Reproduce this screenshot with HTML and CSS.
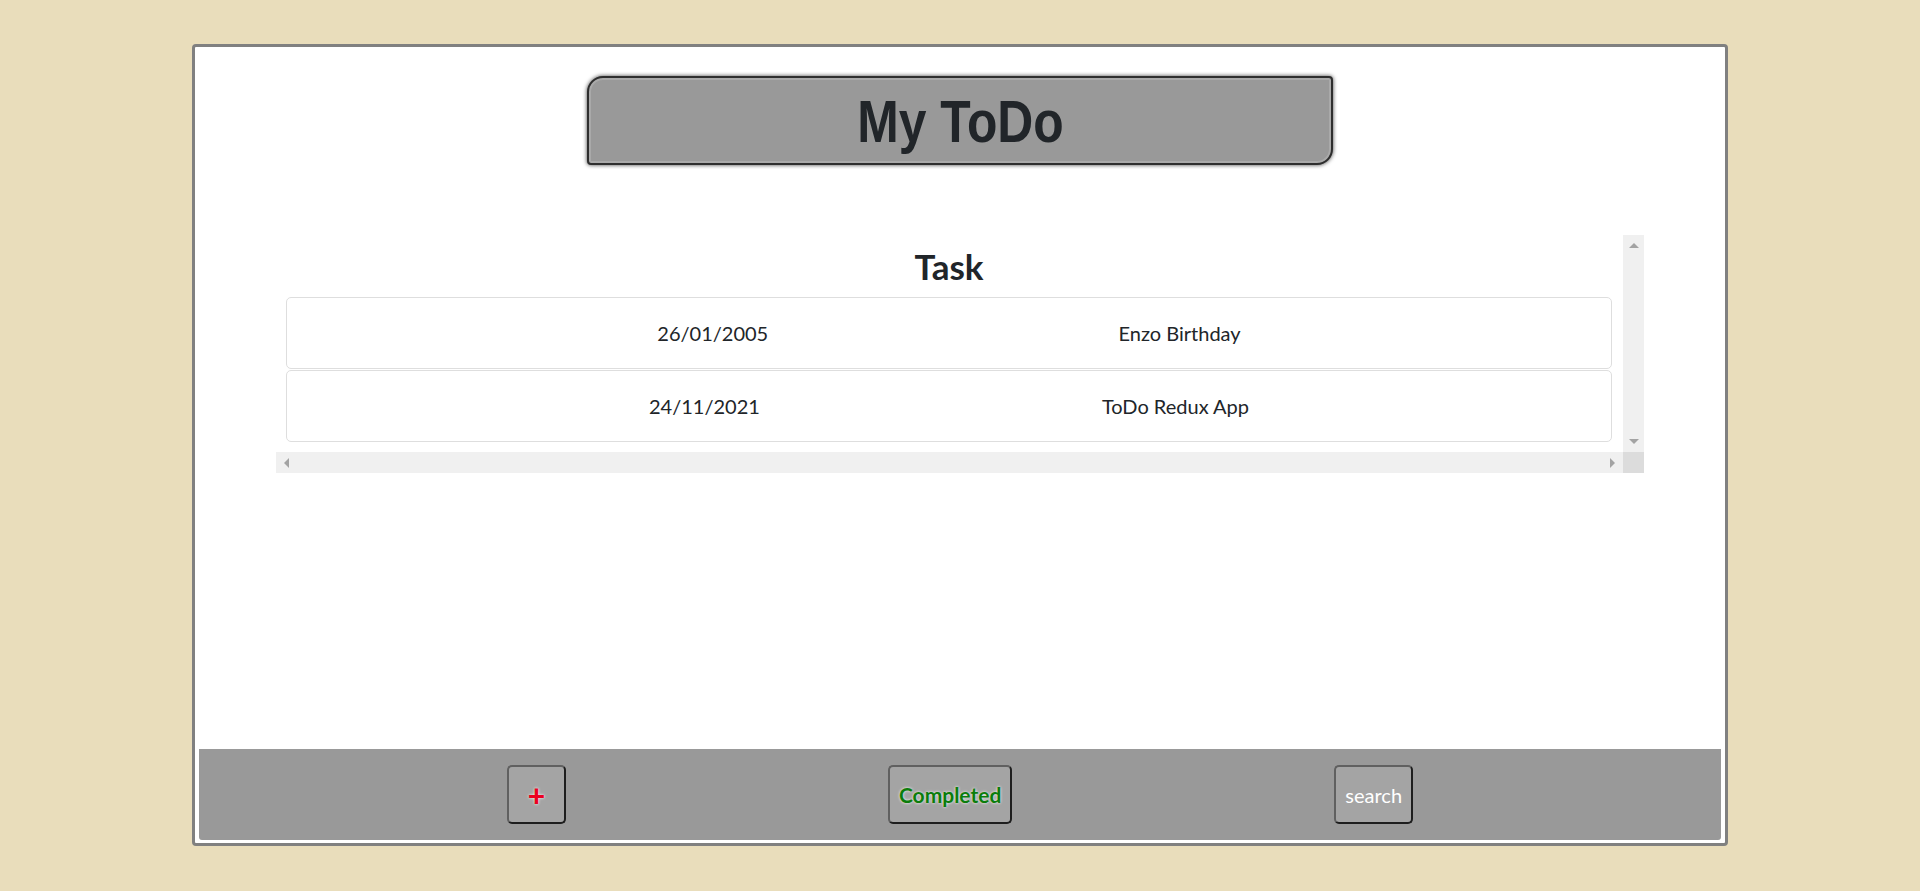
FILE: index.html
```html
<!DOCTYPE html>
<html lang="en">
<head>
<meta charset="utf-8">
<title>My ToDo</title>
<link rel="stylesheet" href="styles.css">
</head>
<body>
<div class="app">
  <header class="title-bar">
    <h1 class="title">My ToDo</h1>
  </header>

  <section class="task-view">
    <div class="task-scroll">
      <h3 class="task-heading">Task</h3>
      <div class="task-row"><span>26/01/2005</span><span>Enzo Birthday</span></div>
      <div class="task-row"><span>24/11/2021</span><span>ToDo Redux App</span></div>
    </div>
    <div class="vbar"><span class="arrow arrow-up"></span><span class="arrow arrow-down"></span></div>
    <div class="hbar"><span class="arrow arrow-left"></span><span class="arrow arrow-right"></span></div>
    <div class="corner"></div>
  </section>

  <footer class="toolbar">
    <button class="tool-btn btn-add">+</button>
    <button class="tool-btn btn-completed">Completed</button>
    <button class="tool-btn btn-search">search</button>
  </footer>
</div>
</body>
</html>
```
FILE: styles.css
```css
html, body {
  margin: 0;
  padding: 0;
}

body {
  background: #e9ddbb;
  font-family: Lato, "Open Sans", sans-serif;
  color: #212529;
  height: 891px;
  overflow: hidden;
}

.app {
  box-sizing: border-box;
  width: 1536px;
  height: 802px;
  margin: 44px auto 0;
  border: 3px solid #808080;
  border-radius: 4px;
  background: #fff;
  display: flex;
  flex-direction: column;
  align-items: center;
}

.title-bar {
  box-sizing: border-box;
  margin-top: 29px;
  width: 746px;
  height: 89px;
  background: #999;
  border: 2px solid #2e2e2e;
  border-radius: 16px 4px 16px 4px;
  box-shadow: 0 0 4px rgba(0, 0, 0, 0.75), inset 0 0 0 2px #a9a9a9;
  display: flex;
  align-items: center;
  justify-content: center;
}

.title {
  margin: 3px 0 0;
  display: inline-block;
  font-family: "Liberation Sans", Arial, sans-serif;
  font-weight: 700;
  font-size: 60px;
  line-height: 1;
  color: #212529;
  transform: scaleX(0.83);
}

.task-view {
  margin-top: 70px;
  width: 1368px;
  height: 238px;
  display: grid;
  grid-template-columns: 1fr 21px;
  grid-template-rows: 1fr 21px;
}

.task-scroll {
  padding: 10px 11px 0 10px;
  overflow: hidden;
}

.task-heading {
  margin: 0 0 10px;
  font-size: 35px;
  font-weight: 700;
  line-height: 42px;
  text-align: center;
}

.task-row {
  display: flex;
  justify-content: space-evenly;
  padding: 20px;
  border: 1px solid #dedede;
  border-radius: 5px;
  font-size: 20px;
  line-height: 30px;
  margin-bottom: 1px;
}

.vbar, .hbar {
  background: #f0f0f0;
  display: flex;
  justify-content: space-between;
  align-items: center;
}

.vbar {
  flex-direction: column;
}

.corner {
  background: #dcdcdc;
}

.arrow {
  width: 21px;
  height: 21px;
  display: flex;
  align-items: center;
  justify-content: center;
}

.arrow::before {
  content: "";
  width: 0;
  height: 0;
}

.arrow-up::before {
  border-left: 5px solid transparent;
  border-right: 5px solid transparent;
  border-bottom: 5px solid #a3a3a3;
}

.arrow-down::before {
  border-left: 5px solid transparent;
  border-right: 5px solid transparent;
  border-top: 5px solid #a3a3a3;
}

.arrow-left::before {
  border-top: 5px solid transparent;
  border-bottom: 5px solid transparent;
  border-right: 5px solid #a3a3a3;
}

.arrow-right::before {
  border-top: 5px solid transparent;
  border-bottom: 5px solid transparent;
  border-left: 5px solid #a3a3a3;
}

.toolbar {
  align-self: stretch;
  margin: auto 4px 3px;
  height: 91px;
  background: #999;
  border-radius: 0 0 3px 3px;
  display: flex;
  align-items: center;
  justify-content: center;
  gap: 322px;
}

.tool-btn {
  box-sizing: border-box;
  min-width: 59px;
  height: 59px;
  padding: 0 9px;
  background: #a4a4a4;
  border: 2px solid;
  border-color: #606060 #1e1e1e #1e1e1e #606060;
  border-radius: 5px;
  font-family: Lato, "Open Sans", sans-serif;
  font-size: 20px;
  cursor: pointer;
}

.btn-add {
  color: #ec0020;
  font-weight: 900;
  font-size: 30px;
  line-height: 1;
  text-shadow: 0 0 3px #fff;
}

.btn-completed {
  color: #0b7d0b;
  font-weight: 700;
  font-size: 21px;
  text-shadow: 0 0 3px #fff;
}

.btn-search {
  color: #fff;
}
```
